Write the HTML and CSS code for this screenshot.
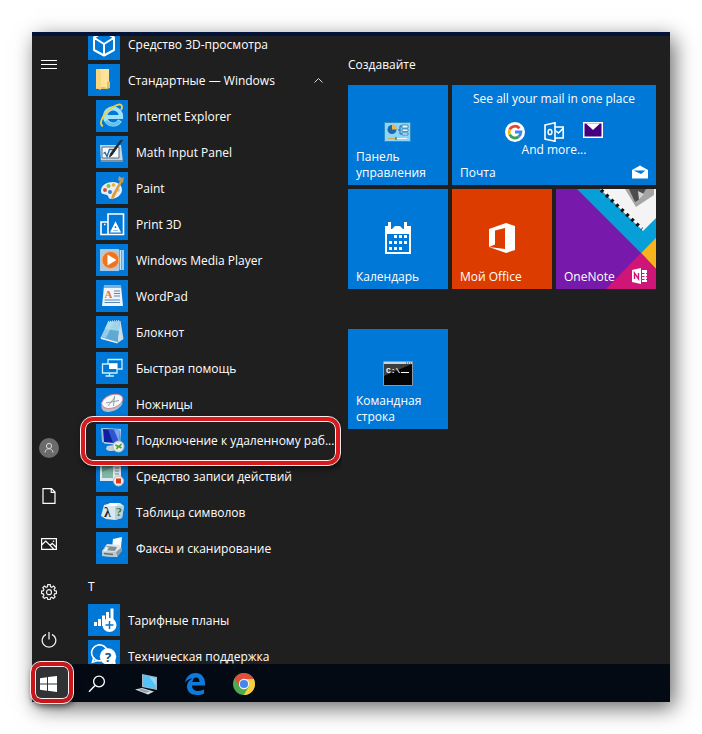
FILE: index.html
```html
<!DOCTYPE html>
<html lang="ru">
<head>
<meta charset="utf-8">
<title>Меню «Пуск»</title>
<link rel="stylesheet" href="styles.css">
</head>
<body>
<div class="desktop">
  <main class="menu">
    <nav class="rail" aria-label="Система">
      <button class="rail-btn" aria-label="Развернуть"><svg width="16" height="16" viewBox="0 0 16 16"><path d="M0 4.500h16M0 8.500h16M0 12.500h16" stroke="#fff"/></svg></button>
      <span class="spacer"></span>
      <button class="rail-btn" aria-label="Пользователь"><svg width="20" height="20" viewBox="0 0 20 20"><circle cx="10" cy="10" r="10" fill="#6b6b6b"/><circle cx="10" cy="8" r="2.600" fill="none" stroke="#d8d8d8"/><path d="M6 14.500c.3-5 7.700-5 8 0" fill="none" stroke="#d8d8d8"/></svg></button>
      <button class="rail-btn" aria-label="Документы"><svg width="16" height="16" viewBox="0 0 16 16"><path d="M2 .6h8.500l3.500 3.500v11.300H2zM10.200.6V4.400H14" fill="none" stroke="#fff" stroke-width="1.200"/></svg></button>
      <button class="rail-btn" aria-label="Изображения"><svg width="16" height="16" viewBox="0 0 16 16"><path d="M.6 2.600h14.800v10.800H.6zM.6 9l4.200-4 8 8.200M9 9.500l2.200-2.200 4.200 4.200" fill="none" stroke="#fff" stroke-width="1.200"/><circle cx="12.500" cy="5.200" r=".8" fill="#fff"/></svg></button>
      <button class="rail-btn" aria-label="Параметры"><svg width="16" height="16" viewBox="0 0 16 16"><path d="M6.800.7h2.400l.4 2 1.300.5L12.600 2l1.600 1.700-1.100 1.700.5 1.300 1.900.4v2.300l-1.900.4-.6 1.300 1.100 1.700-1.700 1.600-1.600-1.100-1.300.6-.4 1.800H6.800l-.4-1.900-1.300-.5-1.600 1.100-1.700-1.600 1.100-1.700-.6-1.300L.5 9.400V7.100l1.900-.4.500-1.300-1.100-1.700L3.500 2l1.600 1.200 1.300-.5z" fill="none" stroke="#eee" stroke-width="1.200"/><circle cx="8" cy="8.200" r="2.500" fill="none" stroke="#eee" stroke-width="1.200"/></svg></button>
      <button class="rail-btn" aria-label="Выключение"><svg width="16" height="16" viewBox="0 0 16 16"><path d="M5 2.300a6.800 6.800 0 1 0 6 0M8 0v7.500" fill="none" stroke="#eee" stroke-width="1.300"/></svg></button>
    </nav>

    <div class="apps">
      <a class="app" href="#"><svg class="ico" viewBox="0 0 32 32"><path d="M16 4l10 5.500V22l-10 5.500L6 22V9.500zM6.500 10L16 16l9.500-6M16 16v11" fill="none" stroke="#fff" stroke-width="2" stroke-linejoin="round"/></svg><span>Средство 3D-просмотра</span></a>
      <a class="app" href="#"><svg class="ico" viewBox="0 0 32 32"><path d="M8 5h13v12l1 1v6l-3 1H8z" fill="#e9bf58"/><path d="M10 5h11v12l-2 1v7l-2-2h-4V8z" fill="#ffe39a"/><path d="M8 5l5 2v19l-5-2z" fill="#f8d47c"/></svg><span>Стандартные — Windows</span><svg class="chevron" width="9" height="9" viewBox="0 0 9 9"><path d="M.5 6.500l4-4 4 4" fill="none" stroke="#ddd"/></svg></a>
      <a class="app sub" href="#"><svg class="ico" viewBox="0 0 32 32"><path d="M24 20.500a8 8 0 1 1 1-5v1.500H11" fill="none" stroke="#9fe0fb" stroke-width="4.200"/><path d="M23.500 21a8 8 0 0 1-13.500 0" fill="none" stroke="#5fc2f0" stroke-width="3"/><path d="M7 26C2 25 7 14 14 9s12-6 12-2c0 1-.4 2-1 3" fill="none" stroke="#f2d045" stroke-width="1.900"/></svg><span>Internet Explorer</span></a>
      <a class="app sub" href="#"><svg class="ico" viewBox="0 0 32 32"><path d="M4 9h21l2 17H5z" fill="#c8d4de"/><path d="M6 11h17v11H6z" fill="#f7fafc" stroke="#536f85"/><path d="M5 24h22v2H5z" fill="#7d8f9d"/><path d="M7.500 17.500l1.500-1 2 4 2.500-7H18" fill="none" stroke="#2167a5" stroke-width="1.300"/><path d="M26.500 4L16 19l-2.500 2 1-3.500L24 5z" fill="#16222e" stroke="#26333d"/></svg><span>Math Input Panel</span></a>
      <a class="app sub" href="#"><svg class="ico" viewBox="0 0 32 32"><path d="M5 19c0-6 6-9 12-9 6 0 9 4 9 8 0 5-6 9-11 9-3 0-2-3-4-4s-6 0-6-4z" fill="#e8eef4"/><circle cx="9" cy="18" r="2" fill="#d6503e"/><circle cx="12.500" cy="14" r="2" fill="#8cba42"/><circle cx="17.500" cy="13" r="1.800" fill="#e3b33d"/><circle cx="14" cy="20" r="2" fill="#2b83c8"/><circle cx="22" cy="18" r="2" fill="#b9cfe2"/><path d="M24 9l2 1-8 16-3 1 1-4z" fill="#e29b3d"/><path d="M22 8l1-4 3 2 2-1-1 6z" fill="#b99b65"/></svg><span>Paint</span></a>
      <a class="app sub" href="#"><svg class="ico" viewBox="0 0 32 32"><path d="M12 6h15.500v20.500H12zM12 14H5v12.500h7M8 16.500h1.500" fill="none" stroke="#fff" stroke-width="1.600"/><path d="M19.500 15.500l4 8h-8zM17.500 21h4" fill="none" stroke="#fff" stroke-width="2"/></svg><span>Print 3D</span></a>
      <a class="app sub" href="#"><svg class="ico" viewBox="0 0 32 32"><path d="M9 6h19v20H9z" fill="#4f9fd9"/><path d="M27 6v20M24.500 6v20" stroke="#c8e4f7" stroke-width="1.300"/><path d="M4 5h19v22H4z" fill="#a9cbe3"/><circle cx="14.500" cy="16" r="8.500" fill="#ee7420" stroke="#f9b27a"/><path d="M11.500 10.500l9 5.500-9 5.500z" fill="#fff"/></svg><span>Windows Media Player</span></a>
      <a class="app sub" href="#"><svg class="ico" viewBox="0 0 32 32"><path d="M8 6h17l2 20H6z" fill="#eef4fa"/><path d="M8 5h17v3H8z" fill="#77b3dd"/><text x="8.500" y="18" class="wp-a">A</text><path d="M18 11h6M18 13.500h6M18 16h6M8.500 20h15.500M8.500 22.500h15.500" stroke="#5b87b5"/></svg><span>WordPad</span></a>
      <a class="app sub" href="#"><svg class="ico" viewBox="0 0 32 32"><path d="M23 5l1.500 0 3 18-6 4z" fill="#cfdde6"/><path d="M12 6l12-1-2.500 21L5 21z" fill="#5faad0"/><path d="M12 6l12-1-1.200 10-14-2z" fill="#9fd4ea"/><path d="M12 6l6-.5L10 22l-5-1z" fill="#b9e2f0" opacity=".6"/><path d="M4.500 21l17 5v1.500L5 23z" fill="#eaf4f9"/><path d="M12 5.500l12-1" stroke="#e4f2f8" stroke-dasharray="1 1"/></svg><span>Блокнот</span></a>
      <a class="app sub" href="#"><svg class="ico" viewBox="0 0 32 32"><path d="M12 12V7.500h14V17h-5M12 12H6.500v9H21v-9zM13.500 21v3M9.500 24H18" fill="none" stroke="#c9f1ff" stroke-width="1.300"/><path d="M13 11.500h8V17h-8z" fill="#fff"/></svg><span>Быстрая помощь</span></a>
      <a class="app sub" href="#"><svg class="ico" viewBox="0 0 32 32"><g transform="rotate(-20 16 14)"><ellipse cx="15" cy="16.500" rx="11" ry="6.500" fill="#aebfca"/><ellipse cx="16.500" cy="13.500" rx="11" ry="6.500" fill="#f6f8f9" stroke="#d88a94"/></g><path d="M10 15l13-2.500M18.500 8l-1 10M12 18l7-9" stroke="#8fa0aa"/></svg><span>Ножницы</span></a>
      <a class="app sub marked" href="#"><svg class="ico" viewBox="0 0 32 32"><path d="M11 22l7-1 2 5c-4 2-9 1-10-1z" fill="#c5d0d8"/><path d="M5 4l5 1-1 14-3-1z" fill="#9db9dc"/><path d="M7 4l18 1-1 16-16-1.500z" fill="#c6d5e4"/><path d="M7 5l17 1-1 13.500L8 18z" fill="#0c1fa0"/><path d="M12 5.300L24 6l-1 13.500-6-.6z" fill="#2f55d0"/><path d="M18 5.700l6 .3-.8 12z" fill="#7fa5ee"/><circle cx="22.500" cy="22.500" r="5.500" fill="#e8ece4" stroke="#b7beb6"/><path d="M19.500 21l3 1.500-2 2.500M25.500 20l-2.500 2.500 2.500 1.500" fill="none" stroke="#3f9b35" stroke-width="1.500"/></svg><span>Подключение к удаленному раб...</span></a>
      <a class="app sub" href="#"><svg class="ico" viewBox="0 0 32 32"><path d="M4 4h21v17H4z" fill="#dfe8ee"/><path d="M6 6h11v12H6z" fill="#5f9f8c"/><path d="M6 12l11-5v11H6z" fill="#7fb7a6"/><path d="M19 8h4M19 11h4M19 14h4" stroke="#6a8aa1"/><circle cx="22.500" cy="21" r="5" fill="#f4f0ec" stroke="#c4b9b2"/><path d="M20 18.500h5v5h-5z" fill="#d9381c"/></svg><span>Средство записи действий</span></a>
      <a class="app sub" href="#"><svg class="ico" viewBox="0 0 32 32"><path d="M8 9l7-2h9l4 3-2 12-7 2-9-1-5-3z" fill="#dbe7ee"/><path d="M14 7h9l-3 3h-9z" fill="#fff"/><path d="M19 10l9 0-2 12-7 2z" fill="#b9cfda"/><text x="8" y="21" class="cm-l">λ</text><text x="20" y="20" class="cm-r">?</text></svg><span>Таблица символов</span></a>
      <a class="app sub" href="#"><svg class="ico" viewBox="0 0 32 32"><path d="M17 7l9-2-1 10-9 1z" fill="#f9fcfd"/><path d="M11 12l13 1 2 5-5 7-15-1v-5z" fill="#dfe6ea"/><path d="M11 14l10 1-2 4-12-1z" fill="#7f9095"/><path d="M6 19l14 1v5L6 24z" fill="#bdc9ce"/><path d="M8 21.500l9 1" stroke="#5f7076" stroke-width="1.300"/><path d="M20 20l6-5v4l-5 6z" fill="#8a9ba2"/><path d="M10 15l-3 4 3 .5 3-4z" fill="#eef3f5"/></svg><span>Факсы и сканирование</span></a>
      <h2 class="letter"><span>Т</span></h2>
      <a class="app" href="#"><svg class="ico" viewBox="0 0 32 32"><path d="M6 18h3v4H6zM10 15h3v7h-3zM14 11.500h3V22h-3zM18 8h3v14h-3zM22.500 4.500h3V22h-3z" fill="#fff"/><circle cx="21.500" cy="21" r="7" fill="#fff"/><path d="M17.500 21h8M21.500 17v8" stroke="#0078d7" stroke-width="1.500"/></svg><span>Тарифные планы</span></a>
      <a class="app" href="#"><svg class="ico" viewBox="0 0 32 32"><path d="M14 20.500a8 8 0 1 1 5.500-9M6 17l-1.500 5L10 20.500" fill="none" stroke="#fff" stroke-width="1.600"/><circle cx="20" cy="16.500" r="8.200" fill="#fff"/><path d="M22 22l6 4-1-7z" fill="#fff"/><text x="17" y="21.500" class="help-q">?</text></svg><span>Техническая поддержка</span></a>
    </div>

    <section class="tiles">
      <h2 class="group">Создавайте</h2>
      <div class="grid">
        <a class="tile" href="#"><svg class="glyph" width="28" height="20" viewBox="0 0 28 20"><path d="M.5.5h26v19H.5z" fill="#8bd5f8" stroke="#2f8cc4"/><circle cx="8" cy="7.500" r="4.500" fill="#1c6aa5"/><path d="M8 7.500V2.500a5 5 0 0 1 5 5z" fill="#f3b14b"/><path d="M14 8h2V4h2M16 8v4h2" fill="none" stroke="#19689c"/><path d="M18 3h6v3h-6zM18 7h6v2.500h-6zM18 11h6v2h-6z" fill="#e9f8ff" stroke="#1d6ea7" stroke-width=".7"/><path d="M4 16.500h19" stroke="#eaf8ff"/><path d="M4 16.500h8" stroke="#d9a850"/><path d="M12 15v3" stroke="#27506d"/></svg><span class="name">Панель управления</span></a>
        <a class="tile wide" href="#">
          <span class="mail-top">See all your mail in one place</span>
          <span class="mail-icons">
            <svg width="20" height="20" viewBox="0 0 20 20"><circle cx="10" cy="10" r="10" fill="#fff"/><g fill="none" stroke-width="2.800"><path d="M14.400 6.200A5.900 5.900 0 0 0 4.700 7.500" stroke="#e5453a"/><path d="M4.700 7.500a5.900 5.900 0 0 0 0 5" stroke="#f5b912"/><path d="M4.700 12.500a5.900 5.900 0 0 0 9 2.200" stroke="#34a455"/><path d="M13.700 14.700A5.900 5.900 0 0 0 15.900 10H10" stroke="#4285f4"/></g></svg>
            <svg width="20" height="20" viewBox="0 0 20 20"><path d="M1 3l10-2.200v18.400L1 17z" fill="none" stroke="#fff" stroke-width="1.600"/><path d="M11 5h8.200v11H11M12 9l2.500 2L19 6.500" fill="none" stroke="#fff" stroke-width="1.600"/><ellipse cx="6" cy="10" rx="1.900" ry="2.600" fill="none" stroke="#fff" stroke-width="1.500"/></svg>
            <svg width="20" height="16" viewBox="0 0 20 16"><path d="M0 0h20v16H0z" fill="#fff"/><path d="M1.500 1.500h17v13h-17z" fill="#45007f"/><path d="M3 1.500h14L10 8z" fill="#fff"/></svg>
          </span>
          <span class="mail-more">And more...</span>
          <span class="name">Почта</span>
          <svg class="badge" width="16" height="16" viewBox="0 0 16 16"><path d="M0 6l8-4.500L16 6v8.500H0z" fill="#fff"/><path d="M1.500 6.500h12L9 10z" fill="#0078d7"/></svg>
        </a>
        <a class="tile" href="#"><svg class="glyph tall" width="28" height="32" viewBox="0 0 28 32"><path d="M1 4h3V0h3v7h1l3-3h5l3 3h1V0h3v4h4v28H1zM3 12v18h22V12z" fill="#fff" fill-rule="evenodd"/><path d="M10 13h3v3h-3zM15 13h3v3h-3zM20 13h3v3h-3zM5 19h3v3H5zM10 19h3v3h-3zM15 19h3v3h-3zM20 19h3v3h-3zM5 25h3v3H5zM10 25h3v3h-3zM15 25h3v3h-3z" fill="#fff"/></svg><span class="name">Календарь</span></a>
        <a class="tile office" href="#"><svg class="glyph tall" width="28" height="32" viewBox="0 0 28 32"><path d="M1 7L18 1l9 3v24l-9 3L1 25l16 2V6L7 8.500v14L1 25z" fill="#fff"/></svg><span class="name">Мой Office</span></a>
        <a class="tile onenote" href="#">
          <svg class="cover" viewBox="0 0 100 100"><path d="M21 0h79v50L85 64z" fill="#069fd8"/><path d="M85 64l15-15v31z" fill="#f8b41c"/><path d="M85 64l15 16v20H50z" fill="#cf1678"/><path d="M44 0h56v29L87 42z" fill="#f4f4f4"/><path d="M69 0h29v6L80 18z" fill="#a5a5a5"/><path d="M73 0h17l-6 10-5 3z" fill="#4c4c4c"/><path d="M82 2l6 3-5 6z" fill="#d0d0d0"/><path d="M45 1l41 39" stroke="#111" stroke-width="3.500" stroke-dasharray="3 4"/></svg>
          <span class="name">OneNote</span>
          <svg class="badge" width="16" height="16" viewBox="0 0 16 16"><path d="M0 2l9-2v16l-9-2zM10 2h5v3h-1v1h1v2h-1v1h1v2h-1v1h1v2h-5v-2h2.500v-1H10v-2h2.500v-1H10V6h2.500V5H10z" fill="#fff"/><path d="M2.500 11V5l4 6V5" fill="none" stroke="#cf1678" stroke-width="1.400"/></svg>
        </a>
      </div>
      <div class="grid second">
        <a class="tile" href="#"><svg class="glyph" width="30" height="25" viewBox="0 0 30 25"><path d="M.5.500h29v24H.5z" fill="#050505" stroke="#8d9aa5"/><path d="M1 1h28v2H1z" fill="#c3d6e6"/><path d="M23 2h1M25 2h1M27 2h1" stroke="#345"/><path d="M1 3h28L1 15z" fill="#3d3d3d"/><text x="3" y="12" class="prompt">C:\</text><path d="M18 11.500h8" stroke="#fff"/></svg><span class="name">Командная строка</span></a>
      </div>
    </section>
  </main>

  <footer class="taskbar">
    <button class="task start" aria-label="Пуск"><svg width="17" height="16" viewBox="0 0 17 16"><path d="M0 2.300l7-1v6.200H0zM8 1.100L17 0v7.500H8zM0 8.500h7v6.200l-7-1zM8 8.500h9V16l-9-1.200z" fill="#fff"/></svg></button>
    <button class="task" aria-label="Поиск"><svg width="18" height="18" viewBox="0 0 18 18"><circle cx="11" cy="6.500" r="5.400" fill="none" stroke="#fff" stroke-width="1.300"/><path d="M7 10.500L1 16.800" stroke="#fff" stroke-width="1.400"/></svg></button>
    <button class="task" aria-label="Этот компьютер"><svg width="24" height="24" viewBox="0 0 24 24"><path d="M8 2l15 3v13L8 15z" fill="#9fb6c5"/><path d="M9 3l13 3v11L9 14z" fill="#56c2f4"/><path d="M15 4.500l7 1.500v8z" fill="#8ad8fa"/><path d="M1 17.500l7-1.500 12 3.500-6 3z" fill="#d3dee6"/><path d="M4 17.800l4-.8 8 2.200-4 1.500z" fill="#8fa1ad"/></svg></button>
    <button class="task" aria-label="Microsoft Edge"><svg width="22" height="22" viewBox="0 0 22 22"><path d="M1 10C2 3 7 0 11.500 0 18 0 21 5 21 10v2.500H8c0 4 3 5.500 6 5.500 2.500 0 4.500-.7 6-1.700v4.200c-2 1-4 1.500-7 1.500-6 0-10-3.500-10-8.500 0-3.500 2-6.500 5.500-8C5 5.500 2.500 7 1 10zm7.500-1h7c0-3-1-4.500-3.300-4.500S8.700 6.500 8.500 9z" fill="#0e7bdc"/></svg></button>
    <button class="task" aria-label="Google Chrome"><svg width="22" height="22" viewBox="0 0 22 22"><circle cx="11" cy="11" r="11" fill="#4cab50"/><path d="M1.500 5.500L6.500 13.500 11 6h9.500A11 11 0 0 0 1.500 5.500z" fill="#e24e3e"/><path d="M11 6h9.800A11 11 0 0 1 10.700 22l5.300-8.500z" fill="#fccd3f"/><circle cx="11" cy="11" r="5.200" fill="#f4f4f4"/><circle cx="11" cy="11" r="4.100" fill="#4486ee"/></svg></button>
  </footer>
</div>
</body>
</html>
```
FILE: styles.css
```css
* {
  box-sizing: border-box;
}

body {
  margin: 0;
  padding: 32px;
  background: #fff;
  color: #fff;
  font: 12px/16px "Open Sans", "Noto Sans", sans-serif;
}

a {
  color: inherit;
  text-decoration: none;
}

button {
  padding: 0;
  border: 0;
  background: none;
}

h2 {
  margin: 0;
  font: inherit;
}

.desktop {
  display: flex;
  flex-direction: column;
  height: calc(100vh - 64px);
  border-top: 4px solid #03143a;
  background: #1f1f1f;
  box-shadow: 4px 6px 20px rgba(0, 0, 0, 0.6);
}

.menu {
  display: flex;
  flex: 1;
  min-height: 0;
}

/* System rail */

.rail {
  display: flex;
  flex-direction: column;
  width: 34px;
  padding-top: 4px;
}

.rail-btn {
  display: grid;
  place-items: center;
  height: 48px;
}

.spacer {
  flex: 1;
}

/* Application list */

.apps {
  display: flex;
  flex-direction: column;
  justify-content: center;
  width: 276px;
  padding-left: 22px;
  overflow: hidden;
}

.app,
.letter {
  display: flex;
  flex: none;
  align-items: center;
  height: 36px;
  white-space: nowrap;
}

.app {
  position: relative;
  gap: 8px;
  margin-right: 4px;
}

.app span {
  padding-top: 2px;
}

.letter {
  padding-top: 6px;
}

.sub {
  padding-left: 8px;
}

.ico {
  flex: none;
  width: 32px;
  height: 32px;
  background: #0078d7;
}

.chevron {
  margin-left: auto;
  margin-right: 15px;
}

.marked::after {
  content: "";
  position: absolute;
  z-index: 1;
  inset: -5px -2px -7px -7px;
  border: 4px solid #d81a1c;
  border-radius: 12px;
  outline: 1px solid #ffeaea;
  box-shadow: inset 0 0 0 1px #ffeaea, 1px 3px 6px rgba(0, 0, 0, 0.7);
}

.wp-a {
  font: bold 11px "Liberation Serif", serif;
  fill: #e07b2e;
}

.cm-l {
  font: bold 14px "Liberation Serif", serif;
  fill: #1c2a33;
}

.cm-r {
  font: bold 12px "Liberation Serif", serif;
  fill: #3a7d45;
}

.help-q {
  font: bold 13px "Noto Sans", sans-serif;
  fill: #0f4f8c;
}

/* Tiles */

.tiles {
  flex: 1;
  padding: 21px 6px 0;
}

.grid {
  display: grid;
  grid-template-columns: repeat(3, 100px);
  grid-auto-rows: 100px;
  gap: 4px;
  margin-top: 12px;
}

.second {
  margin-top: 40px;
}

.tile {
  position: relative;
  display: flex;
  flex-direction: column;
  justify-content: flex-end;
  padding: 4px 8px;
  background: #0078d7;
}

.wide {
  grid-column: span 2;
}

.office {
  background: #dc3c00;
}

.onenote {
  background: #7719aa;
}

.glyph {
  align-self: center;
  margin-bottom: 7px;
}

.tall {
  margin-bottom: 15px;
}

.name {
  position: relative;
}

.cover {
  position: absolute;
  inset: 0;
}

.badge {
  position: absolute;
  right: 8px;
  bottom: 5px;
}

.mail-top,
.mail-more {
  text-align: center;
}

.mail-top {
  margin-bottom: 15px;
}

.mail-icons {
  display: flex;
  justify-content: center;
  gap: 19px;
}

.mail-more {
  margin-bottom: 7px;
}

.prompt {
  font: bold 8px "Liberation Mono", monospace;
  fill: #fff;
}

/* Taskbar */

.taskbar {
  display: flex;
  height: 38px;
  background: #040a13;
}

.task {
  display: grid;
  place-items: center;
  width: 49px;
  padding-top: 2px;
}

.start {
  position: relative;
  width: 40px;
  padding-right: 8px;
  background: #303236;
}

.start::after {
  content: "";
  position: absolute;
  inset: -2px -1px -1px;
  border: 4px solid #c8161b;
  border-radius: 10px;
  outline: 1px solid #ffeaea;
  box-shadow: inset 0 0 0 1px #ffeaea, 1px 3px 6px rgba(0, 0, 0, 0.6);
}
```
